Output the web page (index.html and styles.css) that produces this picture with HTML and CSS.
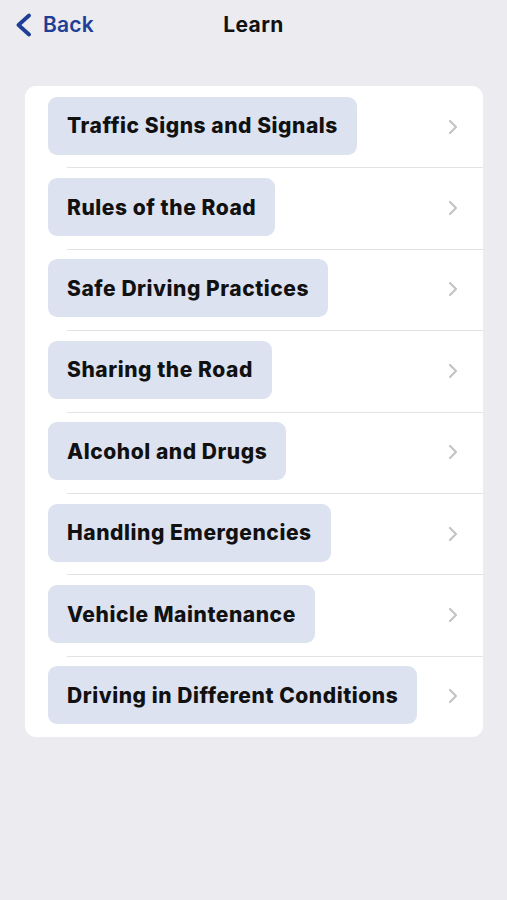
FILE: index.html
```html
<!DOCTYPE html>
<html lang="en">
<head>
<meta charset="utf-8">
<title>Learn</title>
<link rel="stylesheet" href="styles.css">
</head>
<body>
<header class="nav">
  <a class="back" href="#">
    <svg class="back-icon" width="20" height="24" viewBox="0 0 20 24"><path d="M15 2.5 L4.5 12 L15 21.5" fill="none" stroke="#1f3f96" stroke-width="3.8" stroke-linecap="round" stroke-linejoin="round"/></svg>
    <span>Back</span>
  </a>
  <h1 class="title">Learn</h1>
</header>
<main class="card">
  <div class="row"><span class="pill">Traffic Signs and Signals</span><svg class="chev" width="10" height="16" viewBox="0 0 10 16"><path d="M2 2 L8 8 L2 14" fill="none" stroke="#c4c4c8" stroke-width="2.2" stroke-linecap="round" stroke-linejoin="round"/></svg></div>
  <div class="row"><span class="pill">Rules of the Road</span><svg class="chev" width="10" height="16" viewBox="0 0 10 16"><path d="M2 2 L8 8 L2 14" fill="none" stroke="#c4c4c8" stroke-width="2.2" stroke-linecap="round" stroke-linejoin="round"/></svg></div>
  <div class="row"><span class="pill">Safe Driving Practices</span><svg class="chev" width="10" height="16" viewBox="0 0 10 16"><path d="M2 2 L8 8 L2 14" fill="none" stroke="#c4c4c8" stroke-width="2.2" stroke-linecap="round" stroke-linejoin="round"/></svg></div>
  <div class="row"><span class="pill">Sharing the Road</span><svg class="chev" width="10" height="16" viewBox="0 0 10 16"><path d="M2 2 L8 8 L2 14" fill="none" stroke="#c4c4c8" stroke-width="2.2" stroke-linecap="round" stroke-linejoin="round"/></svg></div>
  <div class="row"><span class="pill">Alcohol and Drugs</span><svg class="chev" width="10" height="16" viewBox="0 0 10 16"><path d="M2 2 L8 8 L2 14" fill="none" stroke="#c4c4c8" stroke-width="2.2" stroke-linecap="round" stroke-linejoin="round"/></svg></div>
  <div class="row"><span class="pill">Handling Emergencies</span><svg class="chev" width="10" height="16" viewBox="0 0 10 16"><path d="M2 2 L8 8 L2 14" fill="none" stroke="#c4c4c8" stroke-width="2.2" stroke-linecap="round" stroke-linejoin="round"/></svg></div>
  <div class="row"><span class="pill">Vehicle Maintenance</span><svg class="chev" width="10" height="16" viewBox="0 0 10 16"><path d="M2 2 L8 8 L2 14" fill="none" stroke="#c4c4c8" stroke-width="2.2" stroke-linecap="round" stroke-linejoin="round"/></svg></div>
  <div class="row"><span class="pill">Driving in Different Conditions</span><svg class="chev" width="10" height="16" viewBox="0 0 10 16"><path d="M2 2 L8 8 L2 14" fill="none" stroke="#c4c4c8" stroke-width="2.2" stroke-linecap="round" stroke-linejoin="round"/></svg></div>
</main>
</body>
</html>
```
FILE: styles.css
```css
html, body {
  margin: 0;
  padding: 0;
}
body {
  background: #ebebf0;
  font-family: Inter, "Liberation Sans", sans-serif;
  color: #111;
  min-height: 900px;
}
.nav {
  position: relative;
  height: 48px;
  display: flex;
  align-items: center;
  justify-content: center;
}
.back {
  position: absolute;
  left: 14px;
  top: 12px;
  display: flex;
  align-items: center;
  gap: 9px;
  color: #1f3f96;
  text-decoration: none;
  font-size: 21px;
  font-weight: 600;
  letter-spacing: 0.2px;
}
.back-icon {
  display: block;
}
.title {
  margin: 0;
  font-size: 21px;
  font-weight: 700;
  letter-spacing: 0.4px;
  color: #111;
}
.card {
  margin: 38px 24px 0 25px;
  background: #fff;
  border-radius: 11px;
  padding: 0;
}
.row {
  display: flex;
  align-items: center;
  justify-content: space-between;
  height: 81.4px;
  padding: 0 25px 0 23px;
  box-sizing: border-box;
  position: relative;
}
.row + .row::before {
  content: "";
  position: absolute;
  left: 42px;
  right: 0;
  top: 0;
  height: 1px;
  background: #e2e2e6;
}
.pill {
  background: #dde2f0;
  border-radius: 9px;
  padding: 0 19px;
  height: 58px;
  margin-top: -2px;
  display: flex;
  align-items: center;
  font-size: 21px;
  font-weight: 800;
  color: #111;
  letter-spacing: 0.55px;
}
.chev {
  display: block;
}
```
